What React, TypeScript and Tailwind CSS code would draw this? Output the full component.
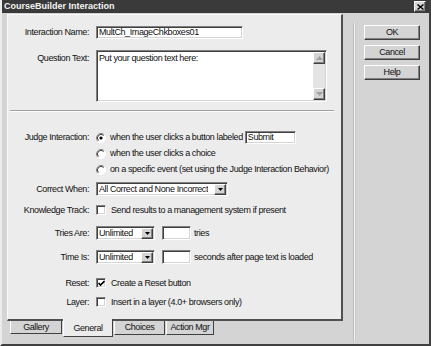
import React from "react";

const sunken =
  "bg-white border border-t-[#808080] border-l-[#808080] border-b-white border-r-white shadow-[inset_1px_1px_0_#404040,inset_-1px_-1px_0_#d4d4d4]";
const raised =
  "bg-[#d4d4d4] border border-t-white border-l-white border-b-[#404040] border-r-[#404040] shadow-[inset_-1px_-1px_0_#808080]";

function Radio({ checked }: { checked?: boolean }) {
  return (
    <svg width="10" height="10" viewBox="0 0 10 10" className="shrink-0">
      <circle cx="5" cy="5" r="4.5" fill="#ffffff" />
      <path d="M8.2 1.8 A4.5 4.5 0 0 0 1.8 8.2" stroke="#808080" strokeWidth="1" fill="none" />
      <path d="M7.5 2.5 A3.5 3.5 0 0 0 2.5 7.5" stroke="#404040" strokeWidth="1" fill="none" />
      <path d="M1.8 8.2 A4.5 4.5 0 0 0 8.2 1.8" stroke="#ffffff" strokeWidth="1" fill="none" />
      {checked && <circle cx="5" cy="5" r="1.6" fill="#000" />}
    </svg>
  );
}

function Check({ checked }: { checked?: boolean }) {
  return (
    <div className={`w-[10px] h-[10px] shrink-0 flex items-center justify-center ${sunken}`}>
      {checked && (
        <svg width="7" height="7" viewBox="0 0 7 7">
          <path d="M0.5 3 L2.5 5 L6.5 1" stroke="#000" strokeWidth="1.6" fill="none" />
        </svg>
      )}
    </div>
  );
}

function Arrow({ up, gray }: { up?: boolean; gray?: boolean }) {
  return (
    <svg width="7" height="4" viewBox="0 0 7 4">
      {up ? (
        <path d="M3.5 0 L7 4 L0 4 Z" fill={gray ? "#a0a0a0" : "#000"} />
      ) : (
        <path d="M0 0 L7 0 L3.5 4 Z" fill={gray ? "#a0a0a0" : "#000"} />
      )}
    </svg>
  );
}

function Select({ value, width }: { value: string; width: string }) {
  return (
    <div className={`${width} h-[14px] flex items-center justify-between pl-[2px] pr-[1px] ${sunken}`}>
      <span className="truncate">{value}</span>
      <div className={`w-[12px] h-[11px] flex items-center justify-center ${raised}`}>
        <svg width="5" height="3" viewBox="0 0 5 3">
          <path d="M0 0 L5 0 L2.5 3 Z" fill="#000" />
        </svg>
      </div>
    </div>
  );
}

function Row({
  label,
  children,
  className = "",
}: {
  label?: string;
  children: React.ReactNode;
  className?: string;
}) {
  return (
    <div className={`flex items-center ${className}`}>
      <div className="w-[81px] text-right shrink-0 whitespace-nowrap">{label}</div>
      <div className="ml-[7px] flex items-center whitespace-nowrap">{children}</div>
    </div>
  );
}

function Btn({ children }: { children: React.ReactNode }) {
  return (
    <div className={`w-[56px] h-[15px] flex items-center justify-center ${raised}`}>{children}</div>
  );
}

export default function App() {
  return (
    <div className="w-[431px] h-[346px] bg-[#d4d4d4] flex flex-col overflow-hidden text-[#111] text-[9px] leading-[11px] tracking-[-0.4px] font-['Liberation_Sans',Arial,sans-serif] border-l-2 border-l-[#ececec] border-r-2 border-r-[#404040] border-b-2 border-b-[#404040]">
      {/* Title bar */}
      <div className="h-[13px] bg-[#3a3a3a] flex items-center justify-between pl-[2px] pr-[3px] shrink-0">
        <span className="text-[#f4f4f4] font-bold tracking-normal">CourseBuilder Interaction</span>
        <div className={`w-[12px] h-[11px] flex items-center justify-center ${raised}`}>
          <svg width="7" height="6" viewBox="0 0 7 6">
            <path d="M0.5 0.5 L6.5 5.5 M6.5 0.5 L0.5 5.5" stroke="#000" strokeWidth="1.4" />
          </svg>
        </div>
      </div>

      {/* Body */}
      <div className="flex flex-1">
        {/* Left column */}
        <div className="pl-[5px] pt-[1px] flex flex-col">
          <div className="w-[336px] h-[307px] bg-[#ececec] border-l border-t border-l-[#fafafa] border-t-[#fafafa] border-r-2 border-b-2 border-r-[#505050] border-b-[#505050] flex flex-col">
            <Row label="Interaction Name:" className="h-[13px] mt-[11px]">
              <div className={`w-[147px] h-[13px] pl-[2px] flex items-center ${sunken}`}>MultCh_ImageChkboxes01</div>
            </Row>

            <div className="flex items-start mt-[11px]">
              <div className="w-[81px] text-right shrink-0 pt-[3px]">Question Text:</div>
              <div className={`ml-[7px] w-[231px] h-[52px] flex ${sunken}`}>
                <div className="flex-1 pl-[2px] pt-[2px]">Put your question text here:</div>
                <div className="w-[12px] flex flex-col justify-between bg-[#e4e4e4] my-[1px] mr-[1px]">
                  <div className={`h-[12px] flex items-center justify-center ${raised}`}>
                    <Arrow up gray />
                  </div>
                  <div className={`h-[12px] flex items-center justify-center ${raised}`}>
                    <Arrow gray />
                  </div>
                </div>
              </div>
            </div>

            <div className="mt-[8px] ml-[2px] w-[324px] h-[2px] border-t border-t-[#a0a0a0] border-b border-b-white" />

            <Row label="Judge Interaction:" className="h-[13px] mt-[19px]">
              <Radio checked />
              <span className="ml-[4px]">when the user clicks a button labeled</span>
              <div className={`ml-[2px] w-[51px] h-[13px] pl-[2px] flex items-center ${sunken}`}>Submit</div>
            </Row>
            <Row className="h-[13px] mt-[3px]">
              <Radio />
              <span className="ml-[4px]">when the user clicks a choice</span>
            </Row>
            <Row className="h-[13px] mt-[3px]">
              <Radio />
              <span className="ml-[4px]">on a specific event (set using the Judge Interaction Behavior)</span>
            </Row>

            <Row label="Correct When:" className="h-[14px] mt-[6px]">
              <Select value="All Correct and None Incorrect" width="w-[132px]" />
            </Row>

            <Row label="Knowledge Track:" className="h-[14px] mt-[7px]">
              <Check />
              <span className="ml-[5px]">Send results to a management system if present</span>
            </Row>

            <Row label="Tries Are:" className="h-[14px] mt-[9px]">
              <Select value="Unlimited" width="w-[59px]" />
              <div className={`ml-[7px] w-[29px] h-[14px] ${sunken}`} />
              <span className="ml-[3px]">tries</span>
            </Row>

            <Row label="Time Is:" className="h-[14px] mt-[10px]">
              <Select value="Unlimited" width="w-[59px]" />
              <div className={`ml-[7px] w-[29px] h-[14px] ${sunken}`} />
              <span className="ml-[3px]">seconds after page text is loaded</span>
            </Row>

            <Row label="Reset:" className="h-[14px] mt-[12px]">
              <Check checked />
              <span className="ml-[5px]">Create a Reset button</span>
            </Row>

            <Row label="Layer:" className="h-[14px] mt-[5px]">
              <Check />
              <span className="ml-[5px]">Insert in a layer (4.0+ browsers only)</span>
            </Row>
          </div>

          {/* Tabs */}
          <div className="flex pl-[3px] items-start">
            <div className="w-[52px] h-[13px] flex items-center justify-center border-l border-l-white border-r border-r-[#404040] border-b border-b-[#404040]">
              Gallery
            </div>
            <div className="w-[50px] h-[18px] -mt-[2px] ml-[1px] bg-[#ececec] flex items-center justify-center pt-[2px] border-l border-l-white border-r border-r-[#404040] border-b border-b-[#404040] relative">
              General
            </div>
            <div className="w-[51px] h-[14px] ml-[1px] flex items-center justify-center border-l border-l-white border-r border-r-[#404040] border-b border-b-[#404040]">
              Choices
            </div>
            <div className="w-[48px] h-[14px] ml-[1px] flex items-center justify-center border-l border-l-white border-r border-r-[#404040] border-b border-b-[#404040]">
              Action Mgr
            </div>
          </div>
        </div>

        {/* Groove */}
        <div className="ml-[10px] mt-[10px] mb-[3px] w-[3px] border-l border-l-[#bcbcbc] border-r border-r-[#c8c8c8] bg-[#f4f4f4]" />

        {/* Buttons */}
        <div className="ml-[8px] mt-[12px] flex flex-col gap-[5px]">
          <Btn>OK</Btn>
          <Btn>Cancel</Btn>
          <Btn>Help</Btn>
        </div>
      </div>
    </div>
  );
}
